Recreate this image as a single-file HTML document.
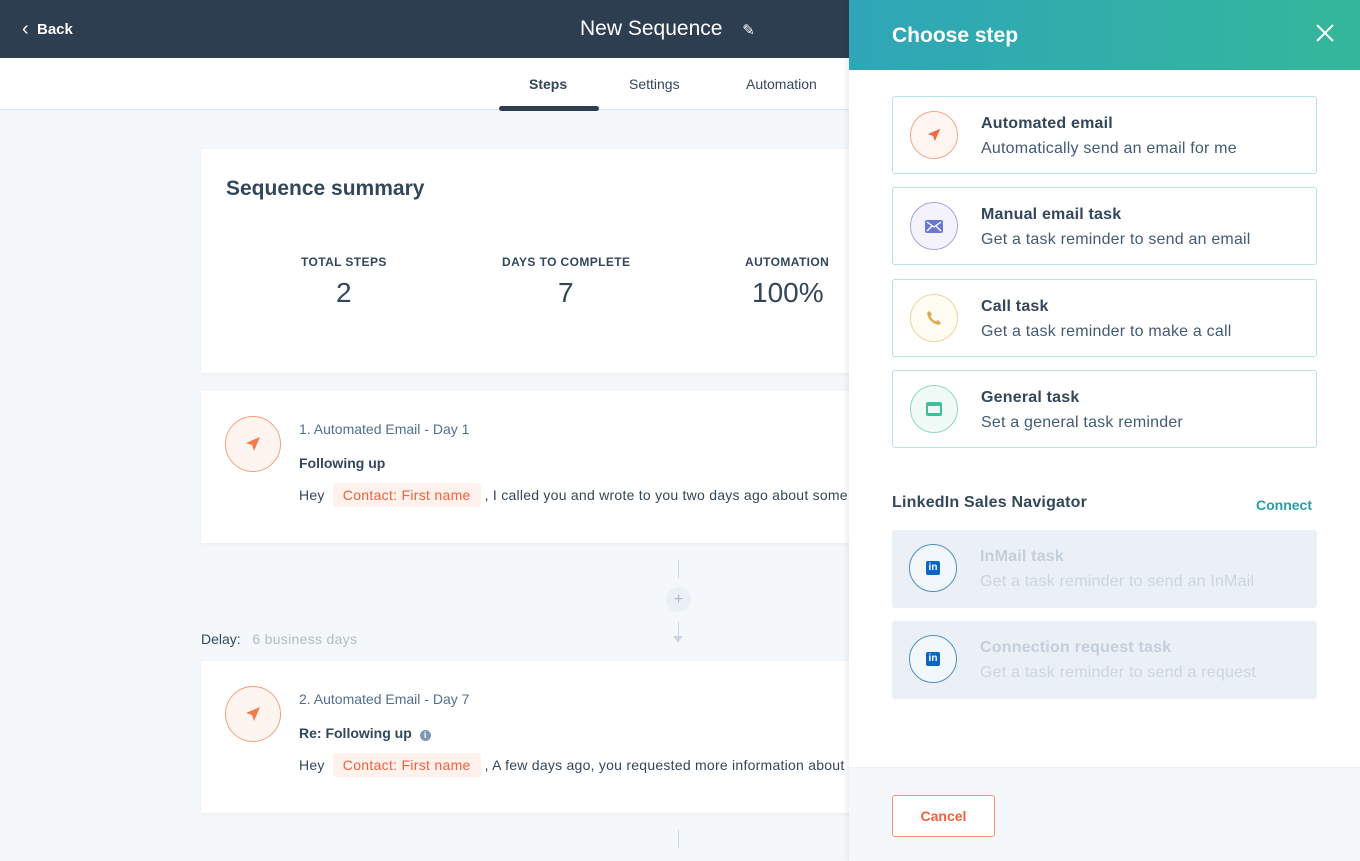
<!DOCTYPE html>
<html><head><meta charset="utf-8"><style>
*{box-sizing:border-box;margin:0;padding:0}
body{width:1360px;height:861px;overflow:hidden;background:#f5f8fa;font-family:"Liberation Sans",sans-serif;color:#33475b;position:relative}
.top{position:absolute;left:0;top:0;width:1360px;height:58px;background:#2d3e50}
.tabs{position:absolute;left:0;top:58px;width:849px;height:52px;background:#fff;border-bottom:1px solid #dfe3eb}
.abs{position:absolute}
.card{position:absolute;background:#fff;box-shadow:0 1px 3px rgba(0,0,0,.05)}
.circ{position:absolute;width:56px;height:56px;border-radius:50%;border:1.5px solid #f2a07e;background:#fff5f0;display:flex;align-items:center;justify-content:center}
.tok{background:#fff1ec;color:#f2603e;padding:4px 10px;border-radius:3px;margin:0 4px;letter-spacing:.3px}
.panel{position:absolute;left:849px;top:0;width:511px;height:861px;background:#fff;box-shadow:-2px 0 6px rgba(0,0,0,.08)}
.ph{height:70px;background:linear-gradient(90deg,#2fa6b8,#34b79b);color:#fff;font-weight:bold;font-size:21px;padding:24px 0 0 43px}
.opt{position:absolute;left:43px;width:425px;height:78px;border:1.5px solid #b5e3ea;border-radius:3px;background:#fff}
.opt .ic{position:absolute;left:17px;top:14px;width:48px;height:48px;border-radius:50%;display:flex;align-items:center;justify-content:center}
.opt b{position:absolute;left:88px;top:18px;font-size:16px;color:#33475b;letter-spacing:.2px}
.opt span{position:absolute;left:88px;top:43px;font-size:16px;color:#425b76;letter-spacing:.2px}
.dis{border:none;background:#eaf0f6}
.dis b{color:#c4cfdb}.dis span{color:#cbd6e2}
.txt{letter-spacing:.25px}
</style></head><body>
<div class="top"></div>
<div class="abs" style="left:22px;top:17px;color:#fff;font-size:15px;font-weight:bold"><span style="font-size:20px;font-weight:normal;position:relative;top:1px">&#x2039;</span>&nbsp; Back</div>
<div class="abs" style="left:580px;top:17px;color:#fff;font-size:21px">New Sequence <span style="font-size:15px;margin-left:14px">&#x270E;</span></div>
<div class="tabs"></div>
<div class="abs" style="left:529px;top:76px;font-size:14px;font-weight:bold">Steps</div>
<div class="abs" style="left:499px;top:106px;width:100px;height:5px;border-radius:3px;background:#2d3e50"></div>
<div class="abs" style="left:629px;top:76px;font-size:14px">Settings</div>
<div class="abs" style="left:746px;top:76px;font-size:14px">Automation</div>

<div class="card" style="left:201px;top:149px;width:660px;height:224px">
 <div class="abs" style="left:25px;top:28px;font-size:21px;font-weight:bold">Sequence summary</div>
 <div class="abs" style="left:100px;top:106px;font-size:12px;font-weight:bold;letter-spacing:.4px">TOTAL STEPS</div>
 <div class="abs" style="left:135px;top:128px;font-size:28px">2</div>
 <div class="abs" style="left:301px;top:106px;font-size:12px;font-weight:bold;letter-spacing:.4px">DAYS TO COMPLETE</div>
 <div class="abs" style="left:357px;top:128px;font-size:28px">7</div>
 <div class="abs" style="left:544px;top:106px;font-size:12px;font-weight:bold;letter-spacing:.4px">AUTOMATION</div>
 <div class="abs" style="left:551px;top:128px;font-size:28px">100%</div>
</div>

<div class="card" style="left:201px;top:391px;width:660px;height:152px">
 <div class="circ" style="left:24px;top:25px"><svg width="18" height="18" viewBox="0 0 18 18"><path d="M16 2 2 8l6 2 2 6z" fill="#f27a4b"/></svg></div>
 <div class="abs" style="left:98px;top:30px;font-size:14px;color:#516f90">1. Automated Email - Day 1</div>
 <div class="abs" style="left:98px;top:64px;font-size:14px;font-weight:bold">Following up</div>
 <div class="abs txt" style="left:98px;top:96px;font-size:14px;white-space:nowrap">Hey <span class="tok">Contact: First name</span>, I called you and wrote to you two days ago about some</div>
</div>

<div class="abs" style="left:678px;top:560px;width:1px;height:18px;background:#cbd6e2"></div>
<div class="abs" style="left:666px;top:587px;width:25px;height:25px;border-radius:50%;background:#eaf0f6;color:#b0bccb;text-align:center;line-height:25px;font-size:16px">+</div>
<div class="abs" style="left:678px;top:622px;width:1px;height:18px;background:#cbd6e2"></div>
<div class="abs" style="left:673px;top:636px;width:0;height:0;border:5px solid transparent;border-top:7px solid #cbd6e2"></div>
<div class="abs" style="left:201px;top:631px;font-size:14px">Delay: &nbsp;&nbsp;<span style="color:#b0bccb;letter-spacing:.3px">6 business days</span></div>

<div class="card" style="left:201px;top:661px;width:660px;height:152px">
 <div class="circ" style="left:24px;top:25px"><svg width="18" height="18" viewBox="0 0 18 18"><path d="M16 2 2 8l6 2 2 6z" fill="#f27a4b"/></svg></div>
 <div class="abs" style="left:98px;top:30px;font-size:14px;color:#516f90">2. Automated Email - Day 7</div>
 <div class="abs" style="left:98px;top:64px;font-size:14px;font-weight:bold">Re: Following up <span style="display:inline-block;width:11px;height:11px;border-radius:50%;background:#7c98b6;color:#fff;font-size:9px;text-align:center;line-height:11px;margin-left:4px">i</span></div>
 <div class="abs txt" style="left:98px;top:96px;font-size:14px;white-space:nowrap">Hey <span class="tok">Contact: First name</span>, A few days ago, you requested more information about</div>
</div>
<div class="abs" style="left:678px;top:830px;width:1px;height:18px;background:#cbd6e2"></div>

<div class="panel">
 <div class="ph">Choose step</div>
 <svg class="abs" style="left:467px;top:24px" width="18" height="18" viewBox="0 0 18 18"><path d="M1 1 17 17M17 1 1 17" stroke="#fff" stroke-width="2"/></svg>
 <div class="opt" style="top:96px"><div class="ic" style="border:1.5px solid #f4a58a;background:#fff5f1"><svg width="16" height="16" viewBox="0 0 18 18"><path d="M16 2 2 8l6 2 2 6z" fill="#f26a43"/></svg></div><b>Automated email</b><span>Automatically send an email for me</span></div>
 <div class="opt" style="top:187px"><div class="ic" style="border:1.5px solid #a9a4e0;background:#f4f3fc"><svg width="18" height="13" viewBox="0 0 18 13"><rect width="18" height="13" rx="2" fill="#6a78d1"/><path d="M2 2 9 7 16 2M2 11 7 6M16 11 11 6" stroke="#fff" stroke-width="1.3" fill="none"/></svg></div><b>Manual email task</b><span>Get a task reminder to send an email</span></div>
 <div class="opt" style="top:279px"><div class="ic" style="border:1.5px solid #f0d49a;background:#fffcf3"><svg width="16" height="16" viewBox="0 0 16 16"><path d="M3 1 6 4 4.5 6Q6 10 10 11.5L12 10 15 13 13 15Q3 13 1 3z" fill="#e0a94f"/></svg></div><b>Call task</b><span>Get a task reminder to make a call</span></div>
 <div class="opt" style="top:370px"><div class="ic" style="border:1.5px solid #8fd8c2;background:#f0faf7"><svg width="16" height="14" viewBox="0 0 16 14"><rect width="16" height="14" rx="2" fill="#3dbf9c"/><rect x="2" y="4" width="12" height="7" fill="#eafaf5"/></svg></div><b>General task</b><span>Set a general task reminder</span></div>
 <div class="abs" style="left:43px;top:494px;font-size:16px;font-weight:bold;letter-spacing:.2px">LinkedIn Sales Navigator</div>
 <div class="abs" style="left:407px;top:497px;font-size:14px;font-weight:bold;color:#2a9cae">Connect</div>
 <div class="opt dis" style="top:530px"><div class="ic" style="border:1.5px solid #4f8fc0;background:#f2f7fb"><div style="width:14px;height:14px;border-radius:2px;background:#0a66c2;color:#fff;font-size:10px;font-weight:bold;text-align:center;line-height:14px">in</div></div><b>InMail task</b><span>Get a task reminder to send an InMail</span></div>
 <div class="opt dis" style="top:621px"><div class="ic" style="border:1.5px solid #4f8fc0;background:#f2f7fb"><div style="width:14px;height:14px;border-radius:2px;background:#0a66c2;color:#fff;font-size:10px;font-weight:bold;text-align:center;line-height:14px">in</div></div><b>Connection request task</b><span>Get a task reminder to send a request</span></div>
 <div class="abs" style="left:0;top:767px;width:511px;height:94px;background:#f5f8fa;border-top:1px solid #eaf0f6"></div>
 <div class="abs" style="left:43px;top:795px;width:103px;height:42px;border:1.5px solid #f2907a;border-radius:3px;background:#fff;color:#f2603e;font-size:14px;font-weight:bold;text-align:center;line-height:40px">Cancel</div>
</div>
</body></html>
